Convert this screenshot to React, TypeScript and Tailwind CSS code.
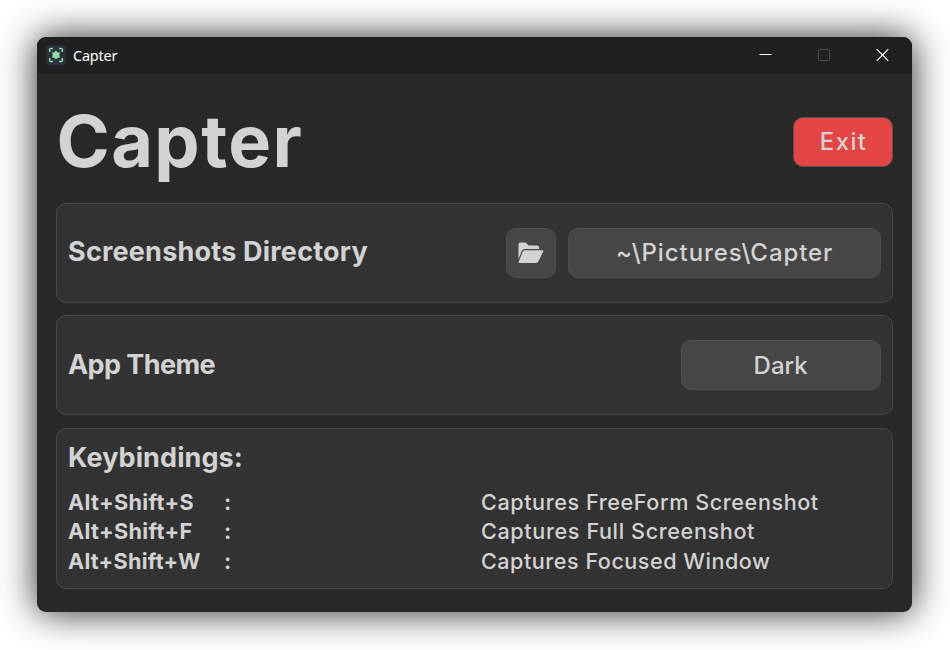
import type { ReactNode } from "react";

function AppIcon() {
  return (
    <svg width="20" height="20" viewBox="0 0 20 20" fill="none">
      <rect width="20" height="20" rx="1.500" fill="#28303a" />
      <path
        d="M3.700 7V4.400q0-.9.9-.9H7M13 3.500h2.400q.9 0 .9.9V7M16.300 13v2.500q0 .9-.9.9H13M7 16.400H4.600q-.9 0-.9-.9V13"
        stroke="#92dcac"
        strokeWidth="1.500"
      />
      <circle cx="10" cy="10" r="3.600" fill="#4f8068" />
      <path d="M10 5.200l1.400 2.200 2.800.2L12.900 10l1.300 2.400-2.800.2L10 14.800l-1.400-2.200-2.800-.2L7.100 10 5.800 7.600l2.800-.2z" fill="#8fe0ac" />
    </svg>
  );
}

function FolderOpenIcon() {
  return (
    <svg width="26" height="22" viewBox="0 0 26 22" fill="currentColor">
      <path d="M.5 17.500V2.500Q.5.500 2.500.500h4.300q.9 0 1.500.6l1.900 1.800q.5.500 1.200.5h7.700q2 0 2 2v1.700H6.600q-1.900 0-2.800 1.700z" />
      <path d="M6.500 8.200h17.700q1.700 0 .9 1.500l-4.600 9.600q-.8 1.700-2.600 1.700H1.700q-1.700 0-.9-1.500L4.900 9.200q.5-1 1.600-1z" />
    </svg>
  );
}

function TitleBar() {
  return (
    <header className="flex h-[37px] shrink-0 items-center bg-[#202020] pb-px pl-[9px] pr-[23.500px]">
      <AppIcon />
      <span className="ml-[7px] font-['Noto_Sans',sans-serif] text-[14.5px] leading-5 tracking-[-0.25px] text-white">
        Capter
      </span>
      <div className="ml-auto flex items-center gap-[46px]">
        <svg width="13" height="14" viewBox="0 0 13 14">
          <path d="M.5 6.500h12" stroke="#fff" />
        </svg>
        <svg width="12" height="14" viewBox="0 0 12 14" fill="none">
          <rect x=".5" y="1.500" width="11" height="11" rx="1" stroke="#4c4c4c" />
        </svg>
        <svg width="13" height="14" viewBox="0 0 13 14">
          <path d="M.7 1.200l11.600 11.600M12.300 1.200L.7 12.800" stroke="#fff" strokeWidth="1.150" />
        </svg>
      </div>
    </header>
  );
}

function Card({ className, children }: { className: string; children: ReactNode }) {
  return (
    <section className={`rounded-[10px] border border-[#484848] bg-[#323232] px-[11.5px] ${className}`}>
      {children}
    </section>
  );
}

const button =
  "flex h-[50px] items-center justify-center rounded-[10px] border border-[#4e4e4e] bg-[#464646] text-2xl font-medium";

const bindings = [
  { keys: "Alt+Shift+S", keysClass: "tracking-[0.36px]", action: "Captures FreeForm Screenshot", actionClass: "tracking-[0.58px]" },
  { keys: "Alt+Shift+F", keysClass: "tracking-[0.36px]", action: "Captures Full Screenshot", actionClass: "tracking-[0.62px]" },
  { keys: "Alt+Shift+W", keysClass: "tracking-[0.26px]", action: "Captures Focused Window", actionClass: "tracking-[0.51px]" },
];

export default function App() {
  return (
    <div className="h-[650px] w-[950px] overflow-hidden bg-white pl-[37px] pt-[37px] font-['Inter',sans-serif] text-[#d3d3d3]">
      <main className="flex h-[575px] w-[875px] flex-col overflow-hidden rounded-[9px] bg-[#282828] shadow-[0_0_37px_rgba(0,0,0,0.85)]">
        <TitleBar />
        <div className="flex flex-col pl-[18.500px] pr-[18.900px]">
          <div className="mt-[30px] flex h-[75px] items-center justify-between">
            <h1 className="mb-[1.500px] ml-px text-[72px] font-bold leading-[75px] tracking-[1.4px]">Capter</h1>
            <button className="flex h-[50px] w-[100px] items-center justify-center rounded-[10px] border border-[#5c5050] bg-[#e54444] pl-px pt-px text-2xl font-medium tracking-[1.37px]">
              Exit
            </button>
          </div>

          <Card className="mt-6 flex h-[100px] items-center">
            <h2 className="mb-[2px] text-[27px] font-bold tracking-[0.21px]">Screenshots Directory</h2>
            <button className={`${button} ml-auto w-[50px]`} aria-label="Open folder">
              <FolderOpenIcon />
            </button>
            <button className={`${button} ml-3 w-[313px] pl-px tracking-[0.91px]`}>~\Pictures\Capter</button>
          </Card>

          <Card className="mt-[12.400px] flex h-[100px] items-center justify-between">
            <h2 className="text-[27px] font-bold tracking-[-0.58px]">App Theme</h2>
            <button className={`${button} w-[200px] pt-px`}>Dark</button>
          </Card>

          <Card className="mt-[12.400px] h-[161px] pt-3">
            <h2 className="text-[27px] font-bold leading-[34px] tracking-[0.1px]">Keybindings:</h2>
            <div className="mt-[12.900px] text-[21.600px] leading-[29.500px]">
              {bindings.map((b) => (
                <div key={b.keys} className="flex">
                  <span className={`w-[156px] font-bold ${b.keysClass}`}>{b.keys}</span>
                  <span className="w-[257px] font-bold">:</span>
                  <span className={`whitespace-nowrap font-medium ${b.actionClass}`}>{b.action}</span>
                </div>
              ))}
            </div>
          </Card>
        </div>
      </main>
    </div>
  );
}
